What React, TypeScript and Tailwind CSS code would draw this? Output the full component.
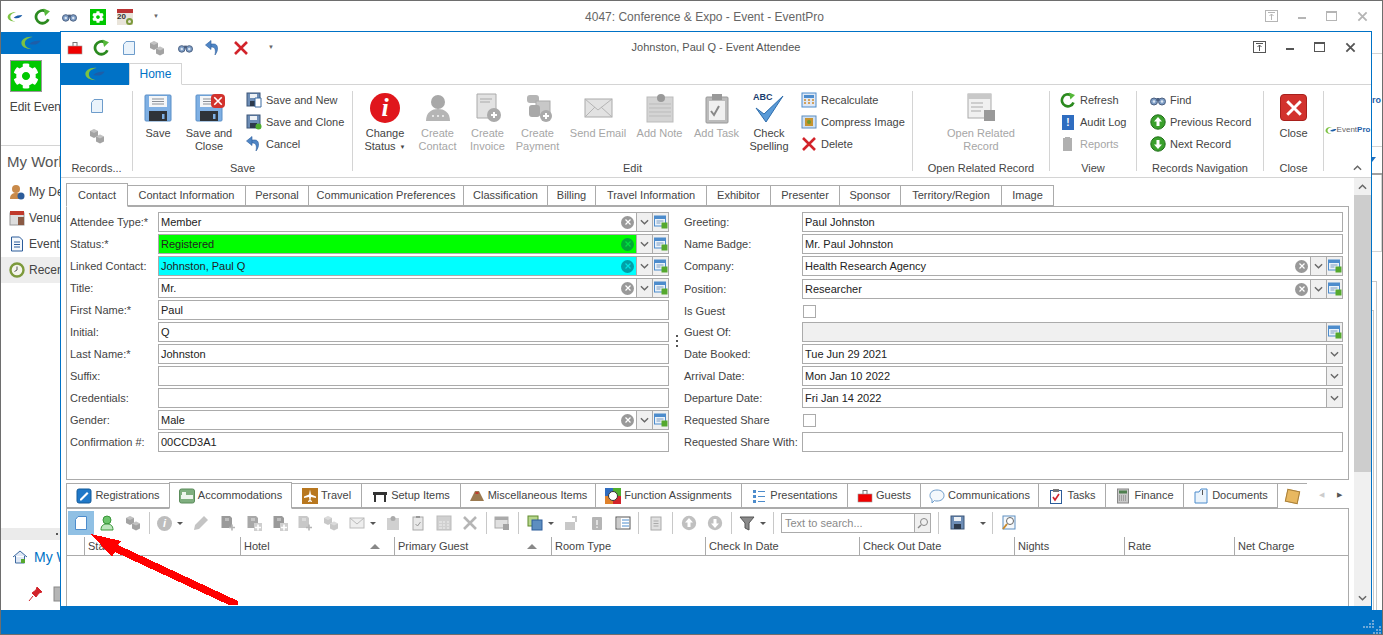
import type { ReactNode } from 'react'
import { FaCog } from 'react-icons/fa'

const FONT = "font-['Liberation_Sans',sans-serif]"

function Logo({ className = '' }: { className?: string }) {
  return (
    <svg viewBox="0 0 24 16" className={className}>
      <path d="M14 1C6 0 1 4 1 8c0 4 5 7 12 7-5-1-8-3-8-7s4-6 9-7z" fill="#7cc242" />
      <path d="M10 9c3-3 8-4 13-4-2 4-7 6-13 4z" fill="#1d5ea8" />
    </svg>
  )
}

function Doc({ className = 'w-4 h-4', fill = '#eaf3fb', stroke = '#6d9ccb' }: { className?: string; fill?: string; stroke?: string }) {
  return (
    <svg viewBox="0 0 16 16" className={className}>
      <path d="M5 1.5h8.5v13h-11V4.5z" fill={fill} stroke={stroke} />
    </svg>
  )
}

function Cubes({ className = 'w-4 h-4', c = '#a3a3a3' }: { className?: string; c?: string }) {
  return (
    <svg viewBox="0 0 16 16" className={className}>
      <path d="M1 3l4-2 4 2v5l-4 2-4-2z" fill={c} />
      <path d="M1 3l4 2 4-2-4-2z" fill="#fff" fillOpacity="0.35" />
      <path d="M7 8.500l4-2 4 2v5l-4 2-4-2z" fill={c} />
      <path d="M7 8.500l4 2 4-2-4-2z" fill="#fff" fillOpacity="0.35" />
    </svg>
  )
}

function Binoculars({ className = 'w-4 h-4' }: { className?: string }) {
  return (
    <svg viewBox="0 0 16 16" className={className}>
      <circle cx="4" cy="9.5" r="3.5" fill="#7d9cc4" stroke="#4a5f80" />
      <circle cx="12" cy="9.5" r="3.5" fill="#7d9cc4" stroke="#4a5f80" />
      <rect x="6.5" y="6" width="3" height="3" fill="#4a5f80" />
      <circle cx="4" cy="9.5" r="1.3" fill="#dbe6f2" />
      <circle cx="12" cy="9.5" r="1.3" fill="#dbe6f2" />
    </svg>
  )
}

function Refresh({ className = 'w-4 h-4' }: { className?: string }) {
  return (
    <svg viewBox="0 0 16 16" className={className}>
      <path d="M13.5 10.5A6 6 0 1 1 11 3.2" fill="none" stroke="#2b8a1f" strokeWidth="2.6" />
      <path d="M9 0.5l6 2.6-4.6 4.4z" fill="#55b83a" />
    </svg>
  )
}

function Undo({ className = 'w-4 h-4' }: { className?: string }) {
  return (
    <svg viewBox="0 0 16 16" className={className}>
      <path d="M5 4h4c4 0 5 6 1 11 1-5 0-8-3-8H5z" fill="#4f86c6" stroke="#2c5c9a" strokeWidth="0.6" />
      <path d="M6 0.5v9L0.5 5z" fill="#4f86c6" stroke="#2c5c9a" strokeWidth="0.6" />
    </svg>
  )
}

function RedX({ className = 'w-4 h-4', c = '#d2232a' }: { className?: string; c?: string }) {
  return (
    <svg viewBox="0 0 16 16" className={className}>
      <path d="M2 2l12 12M14 2L2 14" stroke={c} strokeWidth="2.6" />
    </svg>
  )
}

function Briefcase({ className = 'w-4 h-4' }: { className?: string }) {
  return (
    <svg viewBox="0 0 16 16" className={className}>
      <rect x="6" y="2.5" width="4" height="4" fill="none" stroke="#777" />
      <rect x="1" y="6" width="14" height="8" fill="#f00000" stroke="#999" strokeWidth="0.6" />
    </svg>
  )
}

function Floppy({ className = 'w-8 h-8' }: { className?: string }) {
  return (
    <svg viewBox="0 0 28 28" className={className}>
      <rect x="1" y="1" width="26" height="26" rx="1" fill="#7fb0e4" stroke="#5b8fc7" />
      <rect x="5" y="2" width="18" height="11" fill="#f4f6f8" />
      <path d="M8 5h12M8 7.5h12M8 10h12" stroke="#8a8f96" />
      <rect x="5" y="17" width="18" height="10" fill="#2f3338" />
      <rect x="18" y="20" width="2.5" height="5" fill="#7fb0e4" />
    </svg>
  )
}

function SmallFloppy({ className = 'w-4 h-4', badge }: { className?: string; badge?: 'doc' | 'ok' }) {
  return (
    <svg viewBox="0 0 16 16" className={className}>
      <rect x="1" y="1" width="13" height="13" fill="#6d8db6" stroke="#3c5679" />
      <rect x="4" y="2" width="7" height="4" fill="#eef2f6" />
      <rect x="4" y="9" width="7" height="5" fill="#2d3a4c" />
      {badge === 'doc' && <path d="M9 6h6v9H9z" fill="#fff" stroke="#3d6aa0" />}
      {badge === 'ok' && <circle cx="12.5" cy="12.5" r="3" fill="#4fae2e" />}
    </svg>
  )
}

function GrayBox({ className = 'w-8 h-8', children }: { className?: string; children?: ReactNode }) {
  return (
    <svg viewBox="0 0 32 32" className={className}>
      {children}
    </svg>
  )
}

function RoundArrow({ up, c = '#3aa02c' }: { up?: boolean; c?: string }) {
  return (
    <svg viewBox="0 0 16 16" className="w-4 h-4">
      <circle cx="8" cy="8" r="7.2" fill={c} stroke="#1f6e18" strokeOpacity={c === '#3aa02c' ? 1 : 0} />
      <path d={up ? 'M8 3l4 4.5H9.5V12h-3V7.5H4z' : 'M8 13l4-4.5H9.5V4h-3v4.5H4z'} fill="#fff" />
    </svg>
  )
}

function LookupBtn() {
  return (
    <svg viewBox="0 0 14 14" className="w-[14px] h-[14px]">
      <rect x="0.5" y="1" width="11" height="10" fill="#eaf2fa" stroke="#4d8ccc" />
      <rect x="1" y="1" width="10" height="3" fill="#4d8ccc" />
      <path d="M2.5 6h7M2.5 8h4" stroke="#7d9cc0" />
      <rect x="7.5" y="7.5" width="6" height="6" fill="#55a82e" />
    </svg>
  )
}

function Field({ value, bg = 'bg-white', combo, lookup, clear = 'bg-[#999999] text-white' }: { value?: string; bg?: string; combo?: boolean; lookup?: boolean; clear?: string }) {
  return (
    <div className="flex h-[20px] border border-[#ababab] bg-white">
      <div className={`flex-1 min-w-0 flex items-center justify-between pl-[2px] pr-[2px] ${bg}`}>
        <span className="text-[#222] leading-none">{value}</span>
        {combo && (
          <span className={`w-[13px] h-[13px] rounded-full flex items-center justify-center ${clear}`}>
            <svg viewBox="0 0 8 8" className="w-2 h-2">
              <path d="M1.5 1.5l5 5M6.5 1.5l-5 5" stroke="currentColor" strokeWidth="1.2" />
            </svg>
          </span>
        )}
      </div>
      {combo && <ChevronBox />}
      {lookup && (
        <div className="w-[16px] bg-[#f0f0f0] border-l border-[#ababab] flex items-center justify-center">
          <LookupBtn />
        </div>
      )}
    </div>
  )
}

function ChevronBox() {
  return (
    <div className="w-[16px] bg-[#f0f0f0] border-l border-[#ababab] flex items-center justify-center">
      <svg viewBox="0 0 10 6" className="w-[9px] h-[6px]">
        <path d="M1 1l4 4 4-4" fill="none" stroke="#666" strokeWidth="1.5" />
      </svg>
    </div>
  )
}

function DateField({ value }: { value: string }) {
  return (
    <div className="flex h-[20px] border border-[#ababab]">
      <span className="flex-1 pl-[2px] leading-[18px] text-[#222]">{value}</span>
      <ChevronBox />
    </div>
  )
}

function Row({ label, children, w }: { label: string; children: ReactNode; w: string }) {
  return (
    <div className="flex items-center h-[20px]">
      <span className={`${w} shrink-0 text-[#444] whitespace-nowrap`}>{label}</span>
      <div className="flex-1 min-w-0">{children}</div>
    </div>
  )
}

function Big({ w, lines, icon, off, arrow }: { w: string; lines: string[]; icon: ReactNode; off?: boolean; arrow?: boolean }) {
  return (
    <div className={`${w} shrink-0 flex flex-col items-center ${off ? 'text-[#a6a6a6]' : 'text-[#444]'}`}>
      <div className="h-[33px] flex items-center justify-center">{icon}</div>
      <div className="mt-[3px] leading-[13px] text-center whitespace-nowrap">
        {lines.map((l, i) => (
          <div key={i}>
            {l}
            {arrow && i === lines.length - 1 && <span className="text-[6px] ml-1 align-middle">▼</span>}
          </div>
        ))}
      </div>
    </div>
  )
}

function Small({ icon, label, off }: { icon: ReactNode; label: string; off?: boolean }) {
  return (
    <div className={`flex items-center h-[22px] gap-[4px] whitespace-nowrap ${off ? 'text-[#a6a6a6]' : 'text-[#444]'}`}>
      <span className="w-4 h-4 flex items-center justify-center">{icon}</span>
      {label}
    </div>
  )
}

function Group({ w, label, children }: { w: string; label: string; children: ReactNode }) {
  return (
    <div className={`${w} shrink-0 h-[80px] border-r border-[#d4d4d4] flex flex-col`}>
      <div className="flex-1 flex min-h-0">{children}</div>
      <div className="text-center text-[#444] leading-[14px] -mb-[4px] whitespace-nowrap">{label}</div>
    </div>
  )
}

function Tab({ w, label, active, icon, tall }: { w: string; label: string; active?: boolean; icon?: ReactNode; tall?: boolean }) {
  const h = tall ? (active ? 'h-[27px]' : 'h-[25px]') : active ? 'h-[24px]' : 'h-[21px]'
  return (
    <div
      className={`${w} ${h} shrink-0 flex items-center justify-center gap-[3px] whitespace-nowrap border border-[#ababab] -ml-px text-[#444] ${
        active ? 'border-b-white bg-white relative z-10 -mb-px' : ''
      }`}
    >
      {icon}
      {label}
    </div>
  )
}

function Sep() {
  return <div className="w-px h-[22px] bg-[#c8c8c8] mx-auto" />
}

function Slot({ w, children }: { w: string; children?: ReactNode }) {
  return <div className={`${w} shrink-0 h-[24px] flex items-center justify-center`}>{children}</div>
}

function Caret() {
  return <span className="ml-[5px] w-0 h-0 border-x-[3px] border-x-transparent border-t-[3px] border-t-[#555]" />
}

function Sort() {
  return <span className="mt-[7px] w-0 h-0 border-x-[5px] border-x-transparent border-b-[5px] border-b-[#888]" />
}

function Ico16({ c = '#b0b0b0', d }: { c?: string; d: string }) {
  return (
    <svg viewBox="0 0 16 16" className="w-4 h-4">
      <path d={d} fill={c} />
    </svg>
  )
}

function DocPlus({ c = '#9a9a9a', box }: { c?: string; box?: boolean }) {
  return (
    <svg viewBox="0 0 16 16" className="w-4 h-4">
      <path d="M1.5 1h8.5l2 2v10H1.5z" fill={c} />
      <rect x="5" y="3" width="4" height="3" fill="#fff" fillOpacity="0.35" />
      {box && <rect x="8" y="8" width="8" height="8" fill="#cfcfcf" />}
      <path d="M9 12.5h6M12 9.5v6" stroke={box ? '#fff' : '#b5b5b5'} strokeWidth="1.6" />
    </svg>
  )
}

function WinCtl({ c, right }: { c: string; right: string }) {
  return (
    <div className={`absolute ${right} top-[9px] flex items-center gap-[20px]`}>
      <svg viewBox="0 0 13 12" className="w-[13px] h-[12px]">
        <rect x="0.5" y="0.5" width="12" height="11" fill="none" stroke={c} />
        <path d="M3 2.5h7M6.5 10V4M4.5 6l2-2 2 2" fill="none" stroke={c} />
      </svg>
      <span className="w-[8px] h-[2px] mt-[3px]" style={{ background: c }} />
      <svg viewBox="0 0 11 10" className="w-[11px] h-[10px]">
        <rect x="0.5" y="0.5" width="10" height="9" fill="none" stroke={c} />
        <rect x="0" y="0" width="11" height="2" fill={c} />
      </svg>
      <RedX className="w-[11px] h-[11px]" c={c} />
    </div>
  )
}

const GRIPPED_D = 'M3 2h2V1h5v1h2v13H3z'

const leftRows: { label: string; value?: string; bg?: string; combo?: boolean; lookup?: boolean; clear?: string }[] = [
  { label: 'Attendee Type:*', value: 'Member', combo: true, lookup: true },
  { label: 'Status:*', value: 'Registered', bg: 'bg-[#00ff00]', combo: true, lookup: true, clear: 'bg-[#00a838] text-[#00e040]' },
  { label: 'Linked Contact:', value: 'Johnston, Paul Q', bg: 'bg-[#00ffff]', combo: true, lookup: true, clear: 'bg-[#00a0a8] text-[#00e0e0]' },
  { label: 'Title:', value: 'Mr.', combo: true, lookup: true },
  { label: 'First Name:*', value: 'Paul' },
  { label: 'Initial:', value: 'Q' },
  { label: 'Last Name:*', value: 'Johnston' },
  { label: 'Suffix:' },
  { label: 'Credentials:' },
  { label: 'Gender:', value: 'Male', combo: true, lookup: true },
  { label: 'Confirmation #:', value: '00CCD3A1' },
]

export default function App() {
  return (
    <div className={`relative w-[1383px] h-[635px] overflow-hidden bg-white border border-[#6e6e6e] flex flex-col text-[11px] ${FONT}`}>
      {/* outer title bar */}
      <div className="relative h-[31px] shrink-0 flex items-center pl-[6px] gap-[11px]">
        <Logo className="w-[16px] h-[12px]" />
        <Refresh className="w-[17px] h-[17px]" />
        <Binoculars className="w-[15px] h-[15px]" />
        <div className="w-4 h-4 bg-[#00c800] flex items-center justify-center ml-[2px]">
          <FaCog className="w-3 h-3 text-white" />
        </div>
        <div className="relative w-4 h-4 bg-[#e9e4da] border-t-[4px] border-[#b33] text-[8px] leading-none font-bold text-[#333]">
          20
          <span className="absolute right-0 bottom-0 w-[7px] h-[7px] rounded-full border-2 border-[#7d9a3c]" />
        </div>
        <span className="ml-[9px] text-[6px] text-[#666]">▼</span>
        <span className="absolute left-[26px] right-0 text-center text-[12px] text-[#666] pointer-events-none">4047: Conference &amp; Expo - Event - EventPro</span>
        <WinCtl c="#b5b5b5" right="right-[14px]" />
      </div>

      {/* outer body, mostly behind the attendee window */}
      <div className="flex-1 min-h-0 flex">
        <div className="w-[59px] shrink-0 flex flex-col text-[#444] text-[12px]">
          <div className="h-[22px] bg-[#0072c6] flex items-center justify-center">
            <Logo className="w-[24px] h-[14px]" />
          </div>
          <div className="h-[92px] border-b border-[#d4d4d4] flex flex-col items-center whitespace-nowrap">
            <div className="mt-[6px] w-[32px] h-[32px] ml-[-10px] bg-[#00c800] border border-[#999] flex items-center justify-center">
              <FaCog className="w-[26px] h-[26px] text-white" />
            </div>
            <span className="ml-[13px] mt-[6px]">Edit Event</span>
          </div>
          <div className="pl-[6px] h-[33px] flex items-center text-[15px] text-[#555] whitespace-nowrap">My Work</div>
          {['My De', 'Venue', 'Event', 'Recen'].map((t, i) => (
            <div key={t} className={`h-[26px] flex items-center pl-[8px] gap-[4px] whitespace-nowrap ${i === 3 ? 'bg-[#ededed]' : ''}`}>
              {i === 0 && (
                <svg viewBox="0 0 16 16" className="w-4 h-4 shrink-0">
                  <circle cx="7" cy="5" r="4" fill="#c98a4a" />
                  <path d="M1 15c0-5 3-6 6-6s6 1 6 6z" fill="#c98a4a" />
                  <circle cx="12" cy="12" r="3.5" fill="#2c5c9a" />
                </svg>
              )}
              {i === 1 && (
                <svg viewBox="0 0 16 16" className="w-4 h-4 shrink-0">
                  <rect x="1" y="3" width="14" height="12" fill="#ddd" stroke="#999" />
                  <rect x="1" y="1" width="14" height="4" fill="#c0392b" />
                  <rect x="9" y="7" width="6" height="8" fill="#8a5a44" />
                </svg>
              )}
              {i === 2 && (
                <svg viewBox="0 0 16 16" className="w-4 h-4 shrink-0">
                  <path d="M2.5 1h8l3 3v11h-11z" fill="#f4f8fc" stroke="#2c5c9a" />
                  <path d="M5 6h6M5 8.5h6M5 11h6" stroke="#2c5c9a" />
                </svg>
              )}
              {i === 3 && (
                <svg viewBox="0 0 16 16" className="w-4 h-4 shrink-0">
                  <circle cx="8" cy="8" r="6.5" fill="#f5f5ec" stroke="#7d9a3c" strokeWidth="2.4" />
                  <path d="M8 4.5V8l-2.5 1.5" fill="none" stroke="#555" />
                </svg>
              )}
              {t}
            </div>
          ))}
          <div className="flex-1" />
          <div className="h-[12px] bg-[#ebebeb] flex justify-end items-center pr-[2px]">
            <span className="w-[2px] h-[2px] bg-[#555]" />
          </div>
          <div className="h-[34px] flex items-center pl-[11px] gap-[6px] text-[#0072c6] text-[14px] whitespace-nowrap">
            <svg viewBox="0 0 16 16" className="w-4 h-4 shrink-0">
              <path d="M1 8l7-6 7 6M3.5 7v7h9V7" fill="#dfe8f5" stroke="#3d6aa0" />
              <rect x="9" y="10" width="4" height="4" fill="#55a82e" />
            </svg>
            My W
          </div>
          <div className="flex-1 max-h-[36px] flex items-start pl-[26px] pt-[12px] gap-[8px]">
            <svg viewBox="0 0 16 16" className="w-4 h-4 shrink-0">
              <path d="M10 1l5 5-3 1-3 4-4-4 4-3zM6 10l-4 5" fill="#d2232a" stroke="#d2232a" />
            </svg>
            <svg viewBox="0 0 16 16" className="w-4 h-4 shrink-0">
              <rect x="3" y="1" width="9" height="14" fill="#b5b5b5" stroke="#888" />
            </svg>
          </div>
        </div>
        <div className="flex-1" />
        <div className="w-[10px] shrink-0 flex flex-col">
          <div className="h-[21px] shrink-0" />
          <div className="h-[93px] shrink-0 border-t border-[#d4d4d4] pt-[40px] text-[9px] leading-[12px] font-bold text-[#1d5ea8]">ro</div>
          <div className="h-[27px] shrink-0 border-t border-[#d4d4d4] pt-[10px]">
            <span className="block w-0 h-0 border-t-[5px] border-t-[#1d6fc0] border-r-[4px] border-r-transparent" />
          </div>
          <div className="h-[2px] shrink-0 bg-[#a0a0a0]" />
          <div className="h-[77px] shrink-0 border-r border-b border-[#d4d4d4]" />
          <div className="h-[29px] shrink-0" />
          <div className="flex-1 border-t border-r border-[#c8c8c8] mr-[5px] pt-[28px] flex flex-col">
            <div className="flex-1 border-t border-r border-[#c8c8c8] mr-[2px]" />
          </div>
        </div>
      </div>

      {/* status bar */}
      <div className="h-[24px] shrink-0 bg-[#0072c6] relative">
        <svg viewBox="0 0 20 14" className="absolute right-0 bottom-0 w-[20px] h-[14px]" fill="#6ea8d8">
          <path d="M10 0h2v2h-2zM7 3h2v2H7zM10 3h2v2h-2zM1 6h2v2H1zM4 6h2v2H4zM7 6h2v2H7zM10 6h2v2h-2zM17 6h2v2h-2zM14 9h2v2h-2zM17 9h2v2h-2zM11 12h2v2h-2zM14 12h2v2h-2zM17 12h2v2h-2z" />
        </svg>
      </div>

      {/* attendee window */}
      <div className="absolute left-[59px] top-[30px] w-[1312px] h-[579px] z-10 bg-white border border-[#0072c6] border-b-[4px] flex flex-col">
        <div className="relative h-[31px] shrink-0 flex items-center">
          <Slot w="w-[27px]"><Briefcase /></Slot>
          <Slot w="w-[27px]"><Refresh className="w-[17px] h-[17px]" /></Slot>
          <Slot w="w-[28px]"><Doc /></Slot>
          <Slot w="w-[28px]"><Cubes /></Slot>
          <Slot w="w-[28px]"><Binoculars className="w-[15px] h-[15px]" /></Slot>
          <Slot w="w-[27px]"><Undo /></Slot>
          <Slot w="w-[29px]"><RedX /></Slot>
          <span className="ml-[13px] text-[6px] text-[#666]">▼</span>
          <span className="absolute left-0 right-0 text-center text-[11px] text-[#555] pointer-events-none">Johnston, Paul Q - Event Attendee</span>
          <WinCtl c="#555" right="right-[15px]" />
        </div>

        {/* ribbon tabs */}
        <div className="h-[22px] shrink-0 flex items-end border-b border-[#d4d4d4]">
          <div className="w-[68px] h-[22px] -mb-px bg-[#0072c6] flex items-center justify-center">
            <Logo className="w-[24px] h-[14px]" />
          </div>
          <div className="w-[53px] h-[22px] -mb-px border border-[#d4d4d4] border-b-white bg-white text-[#0072c6] text-[12px] flex items-center justify-center">Home</div>
        </div>

        {/* ribbon */}
        <div className="h-[93px] shrink-0 border-b border-[#d4d4d4] flex pt-[6px] relative">
          <Group w="w-[72px]" label="Records...">
            <div className="flex-1 flex flex-col items-center gap-[14px] pt-[7px]">
              <Doc />
              <Cubes />
            </div>
          </Group>
          <Group w="w-[220px]" label="Save">
            <Big w="w-[50px]" lines={['Save']} icon={<Floppy className="w-[28px] h-[28px]" />} />
            <Big
              w="w-[52px]"
              lines={['Save and', 'Close']}
              icon={
                <span className="relative">
                  <Floppy className="w-[28px] h-[28px]" />
                  <span className="absolute -right-[2px] top-0 w-[14px] h-[14px] bg-[#d2322d] rounded-sm flex items-center justify-center">
                    <RedX className="w-[10px] h-[10px]" c="#fff" />
                  </span>
                </span>
              }
            />
            <div className="ml-[11px] flex flex-col -mt-[2px]">
              <Small icon={<SmallFloppy badge="doc" />} label="Save and New" />
              <Small icon={<SmallFloppy badge="ok" />} label="Save and Clone" />
              <Small icon={<Undo />} label="Cancel" />
            </div>
          </Group>
          <Group w="w-[560px]" label="Edit">
            <div className="flex pl-[6px]">
              <Big
                w="w-[52px]"
                lines={['Change', 'Status']}
                arrow
                icon={
                  <span className="w-[30px] h-[30px] rounded-full bg-[#e0161c] text-white font-['Liberation_Serif',serif] italic font-bold text-[26px] leading-[30px] text-center">i</span>
                }
              />
              <Big
                w="w-[53px]"
                off
                lines={['Create', 'Contact']}
                icon={
                  <GrayBox>
                    <circle cx="16" cy="10" r="7" fill="#a8a8a8" />
                    <path d="M4 29c0-9 6-12 12-12s12 3 12 12z" fill="#b5b5b5" />
                    <path d="M10 24h2M15 24h2M20 24h2" stroke="#e5e5e5" strokeWidth="2" />
                  </GrayBox>
                }
              />
              <Big
                w="w-[47px]"
                off
                lines={['Create', 'Invoice']}
                icon={
                  <GrayBox>
                    <path d="M5 2h19v24H5z" fill="#e2e2e2" stroke="#aaa" />
                    <path d="M8 7h12M8 10h10" stroke="#aaa" />
                    <circle cx="22" cy="23" r="7" fill="#aaa" />
                    <path d="M19 23h6M22 20v6" stroke="#fff" strokeWidth="2" />
                  </GrayBox>
                }
              />
              <Big
                w="w-[53px]"
                off
                lines={['Create', 'Payment']}
                icon={
                  <GrayBox>
                    <rect x="5" y="3" width="12" height="8" rx="3" fill="#b5b5b5" />
                    <rect x="14" y="9" width="14" height="14" fill="#c8c8c8" stroke="#aaa" />
                    <rect x="7" y="13" width="11" height="12" rx="3" fill="#a8a8a8" />
                    <circle cx="24" cy="24" r="6" fill="#aaa" />
                    <path d="M21 24h6M24 21v6" stroke="#fff" strokeWidth="2" />
                  </GrayBox>
                }
              />
              <Big
                w="w-[68px]"
                off
                lines={['Send Email']}
                icon={
                  <GrayBox>
                    <rect x="3" y="7" width="27" height="18" fill="#e2e2e2" stroke="#aaa" />
                    <path d="M3 7l13 11L30 7M3 25l10-10M30 25L19 15" fill="none" stroke="#b5b5b5" />
                  </GrayBox>
                }
              />
              <Big
                w="w-[55px]"
                off
                lines={['Add Note']}
                icon={
                  <GrayBox>
                    <rect x="3" y="5" width="26" height="25" fill="#d4d4d4" stroke="#bbb" />
                    <path d="M5 12h22M5 16h22M5 20h22M5 24h22" stroke="#bbb" />
                    <circle cx="17" cy="6" r="4" fill="#999" />
                  </GrayBox>
                }
              />
              <Big
                w="w-[59px]"
                off
                lines={['Add Task']}
                icon={
                  <GrayBox>
                    <rect x="5" y="5" width="22" height="26" rx="1" fill="#bbb" stroke="#999" />
                    <rect x="8" y="9" width="16" height="19" fill="#f0f0f0" />
                    <rect x="11" y="2" width="10" height="6" fill="#999" />
                    <path d="M10 19l3 4 5-9" fill="none" stroke="#888" strokeWidth="2" />
                  </GrayBox>
                }
              />
              <Big
                w="w-[46px]"
                lines={['Check', 'Spelling']}
                icon={
                  <span className="relative w-[32px] h-[30px]">
                    <span className="absolute left-0 top-[-2px] text-[9px] font-bold text-[#1a3d6e]">ABC</span>
                    <svg viewBox="0 0 32 30" className="w-[32px] h-[30px]">
                      <path d="M3 15l8 6L30 3 13 29z" fill="#5a9bd8" stroke="#2f6dab" />
                    </svg>
                  </span>
                }
              />
            </div>
            <div className="ml-[9px] flex flex-col -mt-[2px]">
              <Small
                icon={
                  <svg viewBox="0 0 16 16" className="w-4 h-4">
                    <rect x="1" y="1" width="14" height="14" fill="#dfe8f5" stroke="#4d8ccc" />
                    <rect x="3" y="3" width="10" height="3" fill="#4d8ccc" />
                    <path d="M3 8h2M7 8h2M11 8h2M3 11h2M7 11h2M11 11h2" stroke="#d08b2c" strokeWidth="1.5" />
                  </svg>
                }
                label="Recalculate"
              />
              <Small
                icon={
                  <svg viewBox="0 0 16 16" className="w-4 h-4">
                    <rect x="1" y="2" width="14" height="12" fill="#cfe0f2" stroke="#5d8ec0" />
                    <rect x="4" y="4" width="8" height="8" fill="#c7932e" />
                    <circle cx="8" cy="8" r="2" fill="#6f9b2c" />
                  </svg>
                }
                label="Compress Image"
              />
              <Small icon={<RedX />} label="Delete" />
            </div>
          </Group>
          <Group w="w-[137px]" label="Open Related Record">
            <Big
              w="w-full"
              off
              lines={['Open Related', 'Record']}
              icon={
                <GrayBox>
                  <rect x="3" y="2" width="23" height="24" fill="#f0f0f0" stroke="#aaa" />
                  <rect x="3" y="2" width="23" height="5" fill="#c8c8c8" />
                  <path d="M6 11h12M6 15h12M6 19h10" stroke="#aaa" />
                  <rect x="19" y="18" width="11" height="11" fill="#999" />
                </GrayBox>
              }
            />
          </Group>
          <Group w="w-[87px]" label="View">
            <div className="flex flex-col pl-[10px] -mt-[2px]">
              <Small icon={<Refresh />} label="Refresh" />
              <Small
                icon={
                  <span className="w-[12px] h-[15px] bg-[#2f6dc0] text-white text-[10px] font-bold text-center leading-[15px]">!</span>
                }
                label="Audit Log"
              />
              <Small off icon={<Ico16 d={GRIPPED_D} />} label="Reports" />
            </div>
          </Group>
          <Group w="w-[127px]" label="Records Navigation">
            <div className="flex flex-col pl-[13px] -mt-[2px]">
              <Small icon={<Binoculars />} label="Find" />
              <Small icon={<RoundArrow up />} label="Previous Record" />
              <Small icon={<RoundArrow />} label="Next Record" />
            </div>
          </Group>
          <Group w="w-[60px]" label="Close">
            <Big
              w="w-full"
              lines={['Close']}
              icon={
                <span className="w-[27px] h-[27px] rounded-sm bg-[#d2322d] border border-[#a8201c] flex items-center justify-center">
                  <RedX className="w-[18px] h-[18px]" c="#fff" />
                </span>
              }
            />
          </Group>
          <div className="flex-1 relative flex flex-col items-center">
            <div className="mt-[33px] flex items-center text-[8px] text-[#666] whitespace-nowrap">
              <Logo className="w-[12px] h-[9px]" />
              Event<span className="font-bold text-[#1d5ea8]">Pro</span>
            </div>
            <svg viewBox="0 0 10 6" className="absolute right-[9px] bottom-[6px] w-[9px] h-[6px]">
              <path d="M1 5l4-4 4 4" fill="none" stroke="#666" strokeWidth="1.6" />
            </svg>
          </div>
        </div>

        {/* content with form and sub tabs */}
        <div className="flex-1 min-h-0 flex">
          <div className="flex-1 min-w-0 pl-[5px] pr-[5px] pt-[5px] flex flex-col">
            <div className="flex items-end h-[23px] pl-[1px] shrink-0">
              <Tab w="w-[62px]" label="Contact" active />
              <Tab w="w-[119px]" label="Contact Information" />
              <Tab w="w-[64px]" label="Personal" />
              <Tab w="w-[156px]" label="Communication Preferences" />
              <Tab w="w-[85px]" label="Classification" />
              <Tab w="w-[49px]" label="Billing" />
              <Tab w="w-[112px]" label="Travel Information" />
              <Tab w="w-[65px]" label="Exhibitor" />
              <Tab w="w-[70px]" label="Presenter" />
              <Tab w="w-[62px]" label="Sponsor" />
              <Tab w="w-[102px]" label="Territory/Region" />
              <Tab w="w-[53px]" label="Image" />
            </div>
            <div className="h-[274px] shrink-0 border border-[#ababab] flex pl-[3px] pr-[5px] pt-[5px]">
              <div className="w-[599px] shrink-0 flex flex-col gap-[2px]">
                {leftRows.map(r => (
                  <Row key={r.label} label={r.label} w="w-[88px]">
                    <Field value={r.value} bg={r.bg} combo={r.combo} lookup={r.lookup} clear={r.clear} />
                  </Row>
                ))}
              </div>
              <div className="w-[15px] shrink-0 flex flex-col items-center pt-[123px] gap-[3px]">
                <span className="w-[2px] h-[2px] bg-[#555]" />
                <span className="w-[2px] h-[2px] bg-[#555]" />
                <span className="w-[2px] h-[2px] bg-[#555]" />
              </div>
              <div className="flex-1 min-w-0 flex flex-col gap-[2px]">
                <Row label="Greeting:" w="w-[118px]"><Field value="Paul Johnston" /></Row>
                <Row label="Name Badge:" w="w-[118px]"><Field value="Mr. Paul Johnston" /></Row>
                <Row label="Company:" w="w-[118px]"><Field value="Health Research Agency" combo lookup /></Row>
                <div className="mt-px">
                  <Row label="Position:" w="w-[118px]"><Field value="Researcher" combo lookup /></Row>
                </div>
                <Row label="Is Guest" w="w-[118px]">
                  <span className="block w-[13px] h-[13px] border border-[#ababab] ml-[1px]" />
                </Row>
                <div className="-mt-px">
                  <Row label="Guest Of:" w="w-[118px]"><Field bg="bg-[#f0f0f0]" lookup /></Row>
                </div>
                <Row label="Date Booked:" w="w-[118px]"><DateField value="Tue Jun 29 2021" /></Row>
                <Row label="Arrival Date:" w="w-[118px]"><DateField value="Mon Jan 10 2022" /></Row>
                <Row label="Departure Date:" w="w-[118px]"><DateField value="Fri Jan 14 2022" /></Row>
                <Row label="Requested Share" w="w-[118px]">
                  <span className="block w-[13px] h-[13px] border border-[#ababab] ml-[1px]" />
                </Row>
                <Row label="Requested Share With:" w="w-[118px]"><Field /></Row>
              </div>
            </div>

            {/* lower tabs */}
            <div className="flex items-end h-[28px] pl-[1px] shrink-0">
              <Tab
                tall
                w="w-[104px]"
                label="Registrations"
                icon={
                  <svg viewBox="0 0 16 16" className="w-4 h-4">
                    <rect x="1" y="1" width="14" height="14" rx="2" fill="#1f78c8" stroke="#145a99" />
                    <path d="M4 11l7-7 1.5 1.5-7 7H4z" fill="#fff" />
                  </svg>
                }
              />
              <Tab
                tall
                active
                w="w-[123px]"
                label="Accommodations"
                icon={
                  <svg viewBox="0 0 16 16" className="w-4 h-4">
                    <rect x="0.5" y="1" width="15" height="14" rx="2" fill="#7fae7f" stroke="#5b8c5b" />
                    <rect x="2" y="7" width="12" height="4" fill="#eef5ee" />
                    <rect x="3" y="4" width="4" height="3" fill="#eef5ee" />
                  </svg>
                }
              />
              <Tab
                tall
                w="w-[71px]"
                label="Travel"
                icon={
                  <svg viewBox="0 0 16 16" className="w-4 h-4">
                    <rect width="16" height="16" fill="#b8771e" />
                    <path d="M8 1.5l1 5 5 2v1.5l-5-1-.5 3 1.5 1V14l-2-.5-2 .5v-.9l1.5-1-.5-3-5 1V8.500l5-2z" fill="#fff" />
                  </svg>
                }
              />
              <Tab
                tall
                w="w-[100px]"
                label="Setup Items"
                icon={
                  <svg viewBox="0 0 16 16" className="w-4 h-4">
                    <path d="M1 4h14v3h-1v7h-2V7H4v7H2V7H1z" fill="#333" />
                  </svg>
                }
              />
              <Tab
                tall
                w="w-[136px]"
                label="Miscellaneous Items"
                icon={
                  <svg viewBox="0 0 16 16" className="w-4 h-4">
                    <path d="M6 3h4l5 10H1z" fill="#9b7a50" />
                    <rect x="6.500" y="4" width="3" height="2" fill="#c0392b" />
                  </svg>
                }
              />
              <Tab
                tall
                w="w-[147px]"
                label="Function Assignments"
                icon={
                  <svg viewBox="0 0 16 16" className="w-4 h-4">
                    <rect width="8" height="8" fill="#2f6dc0" />
                    <rect x="8" width="8" height="8" fill="#4fae2e" />
                    <rect y="8" width="8" height="8" fill="#e0822c" />
                    <rect x="8" y="8" width="8" height="8" fill="#d2232a" />
                    <circle cx="8" cy="8" r="4.500" fill="#fff" stroke="#333" />
                  </svg>
                }
              />
              <Tab tall w="w-[107px]" label="Presentations" icon={<Ico16 c="#4d8ccc" d="M2 2h3v3H2zM2 7h3v3H2zM2 12h3v3H2zM7 3h7v1H7zM7 8h7v1H7zM7 13h7v1H7z" />} />
              <Tab tall w="w-[74px]" label="Guests" icon={<Briefcase />} />
              <Tab
                tall
                w="w-[119px]"
                label="Communications"
                icon={
                  <svg viewBox="0 0 16 16" className="w-4 h-4">
                    <path d="M8 2c4 0 7 2 7 5.500S12 13 8 13c-1 0-2 0-2.500-.5L3 15v-3.500C1.500 10.500 1 9 1 7.500 1 4 4 2 8 2z" fill="#f4f8fc" stroke="#6d9ccb" />
                  </svg>
                }
              />
              <Tab
                tall
                w="w-[68px]"
                label="Tasks"
                icon={
                  <svg viewBox="0 0 16 16" className="w-4 h-4">
                    <rect x="2.500" y="2.500" width="11" height="13" fill="#fff" stroke="#2c5c9a" />
                    <rect x="5" y="1" width="6" height="3" fill="#777" />
                    <path d="M5 9l2 3 4-6" fill="none" stroke="#d2232a" strokeWidth="1.600" />
                  </svg>
                }
              />
              <Tab
                tall
                w="w-[79px]"
                label="Finance"
                icon={
                  <svg viewBox="0 0 16 16" className="w-4 h-4">
                    <rect x="2.500" y="1" width="11" height="14" fill="#c8c8c8" stroke="#888" />
                    <rect x="4" y="2.500" width="8" height="3" fill="#4f7f4f" />
                    <path d="M4 8h8M4 10h8M4 12h8" stroke="#777" strokeDasharray="1 1" />
                  </svg>
                }
              />
              <Tab
                tall
                w="w-[95px]"
                label="Documents"
                icon={
                  <svg viewBox="0 0 16 16" className="w-4 h-4">
                    <path d="M2 4h4l2-3h6v14H2z" fill="#eaf3fb" stroke="#4d8ccc" />
                    <path d="M9.500 2v5" stroke="#555" />
                  </svg>
                }
              />
              <div className="w-[30px] h-[25px] shrink-0 border-t border-[#ababab] -ml-px flex items-center justify-center">
                <span className="w-[13px] h-[13px] bg-[#e8b860] border border-[#a8803c] rotate-12" />
              </div>
              <div className="flex-1 h-[25px] flex items-center justify-end gap-[13px] pr-[7px] text-[7px]">
                <span className="text-[#ccc]">◀</span>
                <span className="text-[#555]">▶</span>
              </div>
            </div>
            <div className="flex-1 min-h-0 border border-b-0 border-[#ababab] flex flex-col">
              <div className="h-[28px] shrink-0 flex items-center pl-[1px]">
                <Slot w="w-[26px] bg-[#90c0e4]"><Doc fill="#fff" stroke="#4d8ccc" /></Slot>
                <Slot w="w-[26px]">
                  <svg viewBox="0 0 16 16" className="w-4 h-4">
                    <circle cx="8" cy="5" r="4" fill="#6cc46c" stroke="#3a963a" />
                    <path d="M2 15c0-5 3-6 6-6s6 1 6 6z" fill="#bfe7bf" stroke="#3a963a" />
                  </svg>
                </Slot>
                <Slot w="w-[26px]"><Cubes /></Slot>
                <Slot w="w-[6px]"><Sep /></Slot>
                <Slot w="w-[36px]">
                  <span className="w-[15px] h-[15px] rounded-full bg-[#bdbdbd] text-white italic font-bold text-[11px] leading-[15px] text-center">i</span>
                  <Caret />
                </Slot>
                <Slot w="w-[26px]"><Ico16 d="M11 1l4 4-9 9-5 1 1-5z" c="#c4c4c4" /></Slot>
                <Slot w="w-[27px]"><DocPlus /></Slot>
                <Slot w="w-[26px]"><DocPlus c="#a8a8a8" box /></Slot>
                <Slot w="w-[25px]"><DocPlus box /></Slot>
                <Slot w="w-[26px]"><DocPlus c="#c8c8c8" /></Slot>
                <Slot w="w-[26px]"><Cubes c="#c8c8c8" /></Slot>
                <Slot w="w-[37px]">
                  <svg viewBox="0 0 16 16" className="w-4 h-4">
                    <rect x="1" y="3" width="14" height="10" fill="#eee" stroke="#bbb" />
                    <path d="M1 3l7 6 7-6" fill="none" stroke="#bbb" />
                  </svg>
                  <Caret />
                </Slot>
                <Slot w="w-[24px]">
                  <svg viewBox="0 0 16 16" className="w-4 h-4">
                    <rect x="2" y="3" width="12" height="12" fill="#d0d0d0" />
                    <circle cx="8" cy="3.500" r="2.500" fill="#aaa" />
                  </svg>
                </Slot>
                <Slot w="w-[26px]">
                  <svg viewBox="0 0 16 16" className="w-4 h-4">
                    <rect x="3" y="2" width="10" height="13" fill="#e8e8e8" stroke="#aaa" />
                    <rect x="6" y="1" width="4" height="2" fill="#999" />
                    <path d="M5.500 9l2 2 3-4" fill="none" stroke="#999" />
                  </svg>
                </Slot>
                <Slot w="w-[26px]">
                  <svg viewBox="0 0 16 16" className="w-4 h-4">
                    <rect x="1" y="1" width="14" height="14" fill="#d0d0d0" stroke="#bbb" />
                    <path d="M3 7h3M7 7h2M11 7h2M3 10h3M7 10h2M11 10h2M3 13h3M7 13h2M11 13h2" stroke="#f0f0f0" />
                  </svg>
                </Slot>
                <Slot w="w-[26px]"><RedX c="#b5b5b5" /></Slot>
                <Slot w="w-[6px]"><Sep /></Slot>
                <Slot w="w-[26px]">
                  <svg viewBox="0 0 16 16" className="w-4 h-4">
                    <rect x="1" y="2" width="13" height="11" fill="#e0e0e0" stroke="#aaa" />
                    <rect x="1" y="2" width="13" height="3" fill="#aaa" />
                    <rect x="9" y="9" width="6" height="6" fill="#a3a3a3" />
                  </svg>
                </Slot>
                <Slot w="w-[7px]"><Sep /></Slot>
                <Slot w="w-[36px]">
                  <svg viewBox="0 0 16 16" className="w-4 h-4">
                    <rect x="1" y="1" width="10" height="10" fill="#b7d68c" stroke="#5f8a2c" />
                    <rect x="5" y="5" width="10" height="10" fill="#5d8ec0" stroke="#2c5c9a" />
                  </svg>
                  <Caret />
                </Slot>
                <Slot w="w-[26px]"><Ico16 d="M2 7h10v8H2zM9 1h5v6h-2V3H9z" c="#c8c8c8" /></Slot>
                <Slot w="w-[26px]">
                  <svg viewBox="0 0 16 16" className="w-4 h-4">
                    <rect x="3" y="2" width="10" height="13" rx="1" fill="#b5b5b5" />
                    <path d="M8 5v5M8 11.500v1.500" stroke="#eee" strokeWidth="1.500" />
                  </svg>
                </Slot>
                <Slot w="w-[25px]">
                  <svg viewBox="0 0 16 16" className="w-4 h-4">
                    <rect x="1" y="2" width="14" height="12" fill="#fff" stroke="#555" />
                    <rect x="2" y="3" width="4" height="10" fill="#ccc" />
                    <path d="M7 5h7M7 8h7M7 11h7" stroke="#4d8ccc" />
                  </svg>
                </Slot>
                <Slot w="w-[7px]"><Sep /></Slot>
                <Slot w="w-[27px]">
                  <svg viewBox="0 0 16 16" className="w-4 h-4">
                    <rect x="3" y="2" width="10" height="13" fill="#e0e0e0" stroke="#aaa" />
                    <path d="M5.500 6h5M5.500 8.500h5M5.500 11h5" stroke="#aaa" />
                  </svg>
                </Slot>
                <Slot w="w-[6px]"><Sep /></Slot>
                <Slot w="w-[27px]"><RoundArrow up c="#c0c0c0" /></Slot>
                <Slot w="w-[26px]"><RoundArrow c="#c0c0c0" /></Slot>
                <Slot w="w-[6px]"><Sep /></Slot>
                <Slot w="w-[36px]">
                  <svg viewBox="0 0 16 16" className="w-4 h-4">
                    <path d="M1 2h14L10 8v7l-4-2V8z" fill="#8a8a8a" stroke="#555" />
                  </svg>
                  <Caret />
                </Slot>
                <Slot w="w-[6px]"><Sep /></Slot>
                <div className="ml-[5px] w-[150px] h-[20px] shrink-0 flex border border-[#ababab]">
                  <span className="flex-1 pl-[3px] text-[#8a8a8a] leading-[18px]">Text to search...</span>
                  <span className="w-[16px] bg-[#f0f0f0] border-l border-[#ababab] flex items-center justify-center">
                    <svg viewBox="0 0 12 12" className="w-3 h-3">
                      <circle cx="7" cy="5" r="3.5" fill="none" stroke="#888" />
                      <path d="M4 8l-3 3" stroke="#888" strokeWidth="1.5" />
                    </svg>
                  </span>
                </div>
                <Slot w="w-[14px]"><Sep /></Slot>
                <Slot w="w-[26px]"><SmallFloppy /></Slot>
                <Slot w="w-[18px]"><Caret /></Slot>
                <Slot w="w-[6px]"><Sep /></Slot>
                <Slot w="w-[27px]">
                  <svg viewBox="0 0 16 16" className="w-4 h-4">
                    <rect x="2" y="1" width="12" height="13" fill="#f4f8fc" stroke="#5d8ec0" />
                    <circle cx="9" cy="6" r="3.5" fill="#fff" stroke="#666" />
                    <path d="M6 9l-4 5" stroke="#c98a2c" strokeWidth="2" />
                  </svg>
                </Slot>
              </div>
              <div className="h-[19px] shrink-0 flex border-b border-[#ababab] text-[#444] leading-[18px]">
                <div className="w-[18px] border-r border-[#ababab]" />
                <div className="w-[156px] pl-[3px] border-r border-[#ababab]">Status</div>
                <div className="w-[154px] pl-[3px] border-r border-[#ababab] flex justify-between pr-[14px]">Hotel<Sort /></div>
                <div className="w-[157px] pl-[3px] border-r border-[#ababab] flex justify-between pr-[14px]">Primary Guest<Sort /></div>
                <div className="w-[154px] pl-[3px] border-r border-[#ababab]">Room Type</div>
                <div className="w-[154px] pl-[3px] border-r border-[#ababab]">Check In Date</div>
                <div className="w-[155px] pl-[3px] border-r border-[#ababab]">Check Out Date</div>
                <div className="w-[110px] pl-[3px] border-r border-[#ababab]">Nights</div>
                <div className="w-[110px] pl-[3px] border-r border-[#ababab]">Rate</div>
                <div className="flex-1 pl-[3px]">Net Charge</div>
              </div>
            </div>
          </div>

          {/* scrollbar */}
          <div className="w-[17px] shrink-0 bg-[#f0f0f0] flex flex-col items-center">
            <div className="h-[17px] flex items-center">
              <svg viewBox="0 0 10 6" className="w-[9px] h-[6px]"><path d="M1 5l4-4 4 4" fill="none" stroke="#666" strokeWidth="1.6" /></svg>
            </div>
            <div className="w-full h-[277px] bg-[#cdcdcd]" />
            <div className="flex-1" />
            <div className="h-[17px] flex items-center">
              <svg viewBox="0 0 10 6" className="w-[9px] h-[6px]"><path d="M1 1l4 4 4-4" fill="none" stroke="#666" strokeWidth="1.6" /></svg>
            </div>
          </div>
        </div>
      </div>

      {/* annotation arrow over the screenshot */}
      <svg viewBox="0 0 1383 635" className="absolute -left-px -top-px w-[1383px] h-[635px] z-30 pointer-events-none" shapeRendering="crispEdges">
        <path d="M91 534L121 541 118 545 238 601V605H229L115 552 112 557z" fill="#ff0000" />
      </svg>
    </div>
  )
}
